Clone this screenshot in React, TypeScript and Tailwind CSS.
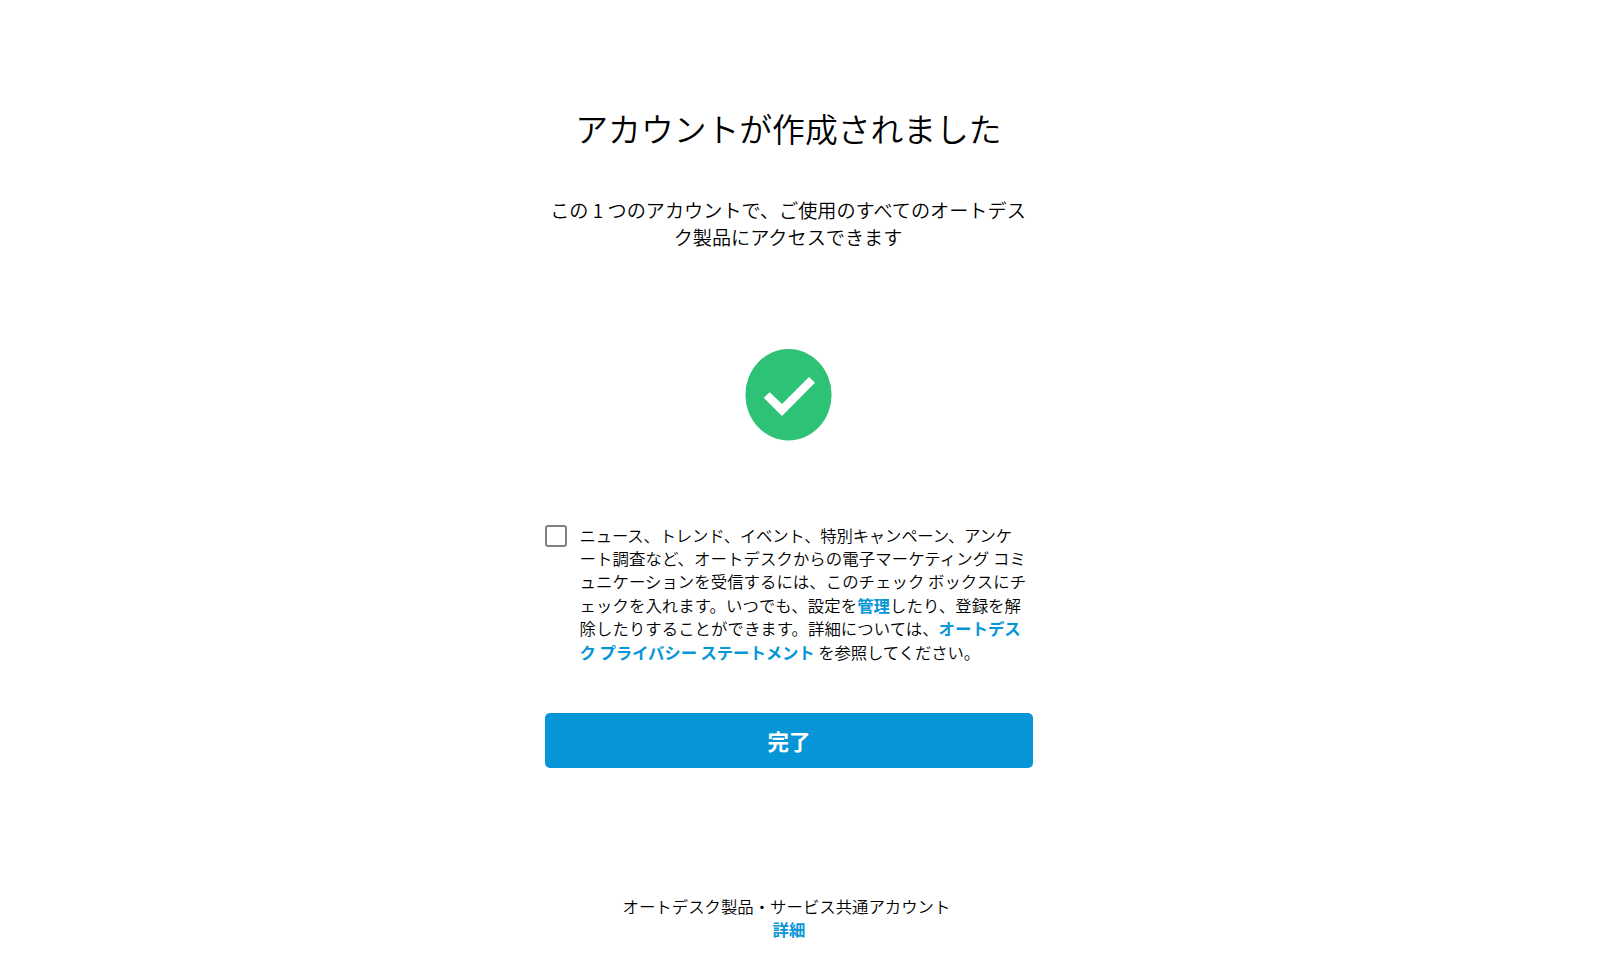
import { useState } from "react";
import type { ReactNode } from "react";

const LEAD_LINES = [
  "この 1 つのアカウントで、ご使用のすべてのオートデス",
  "ク製品にアクセスできます",
];

function InlineLink({ children }: { children: ReactNode }) {
  return (
    <a href="#" className="font-bold text-[#0696d7]">
      {children}
    </a>
  );
}

function SuccessMark() {
  return (
    <svg width="87" height="92" viewBox="0 0 87 92" aria-hidden="true">
      <ellipse cx="43.5" cy="45.7" rx="43.1" ry="45.7" fill="#2dc275" />
      <path d="M18.7 48.7 24.7 43.3 37 55 64 28 70 33.7 37 67Z" fill="#fff" />
    </svg>
  );
}

function ConsentField() {
  const [checked, setChecked] = useState(false);

  return (
    <div className="mt-[83px] flex items-start gap-3">
      <input
        type="checkbox"
        checked={checked}
        onChange={(e) => setChecked(e.target.checked)}
        className="mt-px h-[22px] w-[22px] shrink-0 appearance-none rounded-[3px] border-2 border-[#808080] bg-white checked:bg-[#0696d7]"
      />
      <p className="pl-[0.6px] text-[16.4px] leading-[23.4px] font-[350] whitespace-nowrap">
        <span className="tracking-[-0.22px]">ニュース、トレンド、イベント、特別キャンペーン、アンケ</span>
        <br />
        <span className="tracking-[0.08px]">ート調査など、オートデスクからの電子マーケティング コミ</span>
        <br />
        <span className="tracking-[0.04px]">ュニケーションを受信するには、このチェック ボックスにチ</span>
        <br />
        <span className="tracking-[0.06px]">
          ェックを入れます。いつでも、設定を<InlineLink>管理</InlineLink>したり、登録を解
        </span>
        <br />
        <span className="tracking-[0.04px]">
          除したりすることができます。詳細については、<InlineLink>オートデス</InlineLink>
        </span>
        <br />
        <span className="tracking-[-0.1px]">
          <InlineLink>ク プライバシー ステートメント</InlineLink> を参照してください。
        </span>
      </p>
    </div>
  );
}

export default function App() {
  return (
    <div
      lang="ja"
      className="flex min-h-[974px] justify-center bg-white pr-[22px] font-['Noto_Sans_CJK_JP',sans-serif] text-black"
    >
      <main className="flex w-[488px] flex-col pt-[104px]">
        <h1 className="pr-px text-center text-[32.8px] leading-[48px] font-[350] whitespace-nowrap">
          アカウントが作成されました
        </h1>
        <p className="mt-[45px] pr-0.5 text-center text-[19.15px] leading-[27.3px] font-[350] whitespace-nowrap">
          {LEAD_LINES[0]}
          <br />
          {LEAD_LINES[1]}
        </p>
        <div className="mt-[97px] flex justify-center pr-0.5">
          <SuccessMark />
        </div>
        <ConsentField />
        <button
          type="button"
          className="mt-[49px] h-[55px] w-full rounded-[5px] bg-[#0696d7] text-[21.5px] leading-none font-bold text-white"
        >
          完了
        </button>
        <footer className="mt-[127px] text-center text-[16.4px] leading-[23.4px] font-[350]">
          <p className="pr-[5px] whitespace-nowrap">オートデスク製品・サービス共通アカウント</p>
          <InlineLink>詳細</InlineLink>
        </footer>
      </main>
    </div>
  );
}
